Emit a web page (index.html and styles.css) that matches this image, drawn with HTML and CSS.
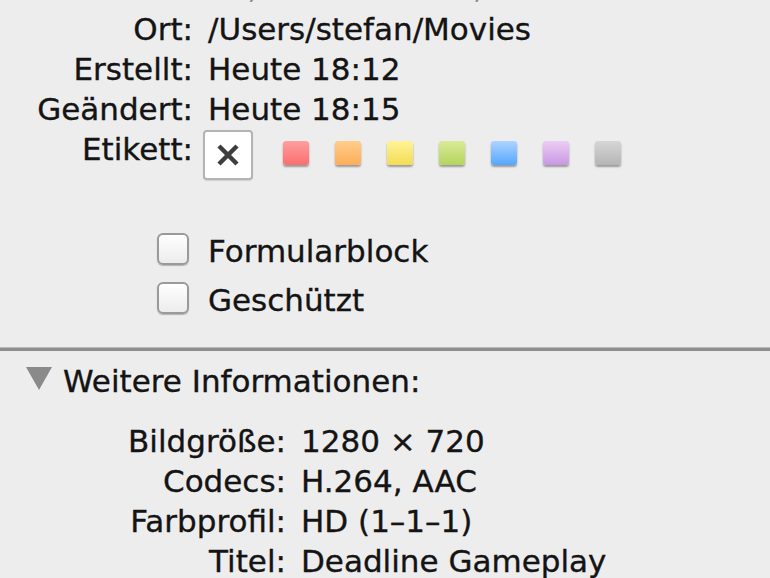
FILE: index.html
```html
<!DOCTYPE html>
<html lang="de">
<head>
<meta charset="utf-8">
<title>Informationen</title>
<link rel="stylesheet" href="styles.css">
</head>
<body>
<div class="panel">
  <div class="props top">
    <div class="row clipped"><span class="lbl"></span><span class="val">35,9 MB auf dem,</span></div>
    <div class="row"><span class="lbl">Ort:</span><span class="val">/Users/stefan/Movies</span></div>
    <div class="row"><span class="lbl">Erstellt:</span><span class="val">Heute 18:12</span></div>
    <div class="row"><span class="lbl">Geändert:</span><span class="val">Heute 18:15</span></div>
    <div class="row etikett">
      <span class="lbl">Etikett:</span>
      <span class="labels">
        <span class="nolabel">
          <svg viewBox="0 0 26 26" width="26" height="26"><path d="M4 4 L22 22 M22 4 L4 22" stroke="#3e3e3e" stroke-width="4.5" stroke-linecap="butt"/></svg>
        </span>
        <span class="sw red"></span>
        <span class="sw orange"></span>
        <span class="sw yellow"></span>
        <span class="sw green"></span>
        <span class="sw blue"></span>
        <span class="sw purple"></span>
        <span class="sw gray"></span>
      </span>
    </div>
  </div>

  <div class="checks">
    <label class="check"><span class="box"></span><span>Formularblock</span></label>
    <label class="check"><span class="box"></span><span>Geschützt</span></label>
  </div>

  <div class="sep"></div>

  <div class="disclosure"><span class="tri"></span><span>Weitere Informationen:</span></div>

  <div class="props more">
    <div class="row"><span class="lbl">Bildgröße:</span><span class="val">1280 × 720</span></div>
    <div class="row"><span class="lbl">Codecs:</span><span class="val">H.264, AAC</span></div>
    <div class="row"><span class="lbl">Farbprofil:</span><span class="val">HD (1–1–1)</span></div>
    <div class="row"><span class="lbl">Titel:</span><span class="val">Deadline Gameplay</span></div>
  </div>
</div>
</body>
</html>
```

FILE: styles.css
```css
html, body {
  margin: 0;
  padding: 0;
  background: #ededed;
  overflow: hidden;
}

body {
  width: 770px;
  height: 578px;
  font-family: "DejaVu Sans", "Liberation Sans", sans-serif;
  font-size: 31px;
  color: #141414;
  -webkit-text-stroke: 0.35px #141414;
}

.panel {
  display: flex;
  flex-direction: column;
}

.props {
  display: flex;
  flex-direction: column;
}

.props.top {
  margin-top: -31px;
}

.row {
  display: flex;
  height: 40px;
  line-height: 40px;
  white-space: nowrap;
}

.row.clipped {
  margin-top: -2px;
  margin-bottom: 2px;
  color: #8a8a8a;
  -webkit-text-stroke: 0;
}

.top .lbl {
  width: 193px;
  text-align: right;
  flex: none;
}

.top .val {
  margin-left: 15px;
}

.more {
  margin-top: 20px;
}

.more .lbl {
  width: 286px;
  text-align: right;
  flex: none;
}

.more .val {
  margin-left: 15px;
}

.row.etikett {
  height: 51px;
}

.labels {
  display: flex;
  align-items: flex-start;
  margin-left: 10px;
}

.nolabel {
  width: 46px;
  height: 46px;
  margin-top: 1px;
  background: #fff;
  border: 2px solid #b4b4b4;
  border-radius: 4px;
  display: flex;
  align-items: center;
  justify-content: center;
  box-shadow: 0 1px 1px rgba(0,0,0,0.12);
  margin-right: 30px;
}

.sw {
  width: 26px;
  height: 24px;
  margin-top: 12px;
  margin-right: 26px;
  border-radius: 3px;
  box-shadow: 0 2px 2px rgba(0,0,0,0.35);
}

.sw.red    { background: linear-gradient(#ff9e9e, #fb6f6f); }
.sw.orange { background: linear-gradient(#ffcd8a, #fdae58); }
.sw.yellow { background: linear-gradient(#fff396, #f4dc55); }
.sw.green  { background: linear-gradient(#d9eb98, #b5d45e); }
.sw.blue   { background: linear-gradient(#acd5ff, #56a6ff); }
.sw.purple { background: linear-gradient(#eccdf3, #c998e3); }
.sw.gray   { background: linear-gradient(#d6d6d6, #b5b5b5); }

.checks {
  display: flex;
  flex-direction: column;
  margin-top: 51px;
  padding-left: 157px;
  gap: 9px;
}

.check {
  display: flex;
  align-items: flex-start;
  height: 40px;
  line-height: 40px;
}

.box {
  width: 28px;
  height: 28px;
  margin-top: 2px;
  margin-right: 19px;
  border: 2px solid #9a9a9a;
  border-radius: 6px;
  background: linear-gradient(#ffffff, #ececec);
  box-shadow: 0 1px 1px rgba(0,0,0,0.25);
  flex: none;
}

.sep {
  margin-top: 27px;
  height: 3px;
  background: #8e8e8e;
  border-top: 1px solid #b9b9b9;
}

.disclosure {
  display: flex;
  align-items: flex-start;
  height: 40px;
  line-height: 40px;
  margin-top: 10px;
  padding-left: 26px;
  white-space: nowrap;
}

.tri {
  width: 0;
  height: 0;
  margin-top: 6px;
  margin-right: 11px;
  border-left: 13.5px solid transparent;
  border-right: 13.5px solid transparent;
  border-top: 23px solid #8a8a8a;
  flex: none;
}
```
